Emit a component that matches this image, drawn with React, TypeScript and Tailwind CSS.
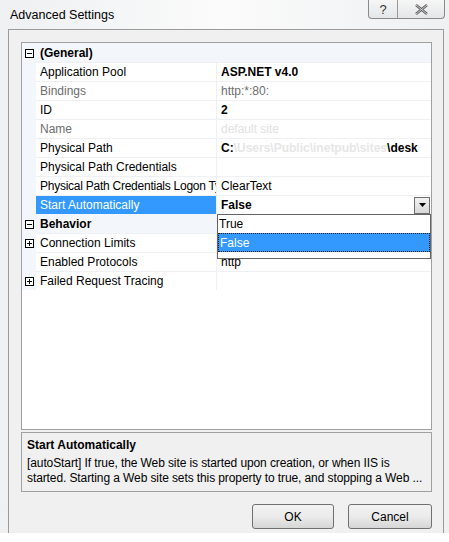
import React from 'react';

type Row = {
  name: string;
  value?: React.ReactNode;
  kind?: 'category' | 'prop';
  expander?: 'plus' | 'minus';
  dim?: boolean;
  selected?: boolean;
  tight?: boolean;
};

function Box({ sign }: { sign: 'plus' | 'minus' }) {
  return (
    <svg width="9" height="9" viewBox="0 0 9 9" className="block">
      <rect x="0.5" y="0.5" width="8" height="8" fill="#fff" stroke="#000" />
      <line x1="2" y1="4.5" x2="7" y2="4.5" stroke="#000" />
      {sign === 'plus' && <line x1="4.5" y1="2" x2="4.5" y2="7" stroke="#000" />}
    </svg>
  );
}

const rows: Row[] = [
  { name: '(General)', kind: 'category', expander: 'minus' },
  { name: 'Application Pool', value: <span className="font-bold">ASP.NET v4.0</span> },
  { name: 'Bindings', dim: true, value: <span className="text-[#6d6d6d]">http:*:80:</span> },
  { name: 'ID', value: <span className="font-bold">2</span> },
  { name: 'Name', dim: true, value: <span className="text-[#e2e2e2]">default site</span> },
  {
    name: 'Physical Path',
    value: (
      <span className="font-bold whitespace-nowrap">
        C:<span className="text-[#e6e6e6]">\Users\Public\inetpub\sites</span>\desk
      </span>
    ),
  },
  { name: 'Physical Path Credentials' },
  { name: 'Physical Path Credentials Logon Type', value: 'ClearText', tight: true },
  { name: 'Start Automatically', selected: true },
  { name: 'Behavior', kind: 'category', expander: 'minus' },
  { name: 'Connection Limits', expander: 'plus' },
  { name: 'Enabled Protocols', value: 'http' },
  { name: 'Failed Request Tracing', expander: 'plus' },
];

function GridRow({ row }: { row: Row }) {
  const cat = row.kind === 'category';
  return (
    <div className="flex h-[19px] relative">
      <div className="w-[14px] shrink-0 flex items-center justify-center bg-[#f3f6fb] pt-[1px]">
        {row.expander && <Box sign={row.expander} />}
      </div>
      {cat ? (
        <div className="flex-1 bg-[#f3f6fb] flex items-center pl-[4px] pt-[1px] font-bold">
          <span className="whitespace-nowrap">{row.name}</span>
        </div>
      ) : (
        <>
          <div className="w-[181px] shrink-0 border-t border-r border-[#eef0f3] flex overflow-hidden">
            <div
              className={`flex-1 flex items-center pl-[4px] ${
                row.selected ? 'bg-[#3399ff] text-white' : row.dim ? 'text-[#6d6d6d]' : ''
              }`}
            >
              <span className={`whitespace-nowrap shrink-0 ${row.tight ? 'tracking-[-0.25px]' : ''}`}>{row.name}</span>
            </div>
          </div>
          <div className="flex-1 min-w-0 flex items-center pl-[4px] overflow-hidden whitespace-nowrap border-t border-[#eef0f3]">
            {row.selected ? (
              <div className="flex-1 flex items-center justify-between">
                <span className="font-bold">False</span>
                <div className="w-[16px] h-[17px] mr-[1px] border border-[#6f6f6f] bg-gradient-to-b from-[#f2f2f2] to-[#d9d9d9] flex items-center justify-center">
                  <svg width="7" height="4" viewBox="0 0 7 4">
                    <polygon points="0,0 7,0 3.5,4" fill="#000" />
                  </svg>
                </div>
              </div>
            ) : (
              <span className="shrink-0">{row.value}</span>
            )}
          </div>
        </>
      )}
      {row.selected && (
        <div className="absolute left-[195px] top-[19px] w-[214px] z-10 bg-white border border-[#646464] flex flex-col">
          <div className="h-[18px] flex items-center pl-[1px]">True</div>
          <div className="h-[19px] flex items-center pl-[1px] bg-[#3399ff] text-white border border-dotted border-[#1a1a1a]">
            False
          </div>
          <div className="h-[6px]" />
        </div>
      )}
    </div>
  );
}

export default function App() {
  return (
    <div className="w-[449px] h-[542px] bg-white overflow-hidden flex flex-col text-[12px] leading-none text-black font-['Liberation_Sans',Arial,sans-serif]">
      <div className="h-[533px] flex flex-col bg-gradient-to-r from-[#eef0f2] via-[#fbfbfb] to-[#eef0f2]">
        {/* title bar */}
        <div className="h-[29px] flex shrink-0">
          <div className="pl-[10px] pt-[9px] text-[12.5px]">Advanced Settings</div>
          <div className="ml-auto mr-[4px] h-[19px] flex border border-t-0 border-[#8a8a8a] rounded-b-[4px] bg-gradient-to-b from-[#f6f6f6] to-[#e4e6e8]">
            <div className="w-[29px] flex items-center justify-center border-r border-[#9a9a9a] text-[13px] text-[#333]">?</div>
            <div className="w-[46px] flex items-center justify-center">
              <svg width="13" height="11" viewBox="0 0 13 11">
                <path d="M1 1 L12 10 M12 1 L1 10" stroke="#555" strokeWidth="2.4" fill="none" />
                <path d="M1 1 L12 10 M12 1 L1 10" stroke="#f4f4f4" strokeWidth="0.8" fill="none" />
              </svg>
            </div>
          </div>
        </div>
        {/* body */}
        <div className="flex flex-1 min-h-0">
          <div className="w-[9px] shrink-0 border-r border-[#9b9b9b]" />
          <div className="flex-1 min-w-0 bg-[#f0f0f0] border-t border-r border-[#9b9b9b] pl-[12px] pr-[10px] pt-[12px] flex flex-col">
            <div className="h-[388px] w-[411px] border border-[#a0a0a0] bg-white flex flex-col">
              {rows.map((r) => (
                <GridRow key={r.name} row={r} />
              ))}
            </div>
            <div className="mt-[2px] w-[411px] h-[60px] border border-[#a0a0a0] bg-[#f0f0f0] px-[5px] pt-[5px] flex flex-col gap-[4px]">
              <div className="font-bold h-[14px] flex items-center">Start Automatically</div>
              <div className="leading-[15px] tracking-[-0.1px] whitespace-nowrap">
                <div>[autoStart] If true, the Web site is started upon creation, or when IIS is</div>
                <div>started. Starting a Web site sets this property to true, and stopping a Web ...</div>
              </div>
            </div>
            <div className="flex justify-end gap-[14px] mt-[12px] pr-[1px]">
              <button className="w-[82px] h-[25px] rounded-[3px] border border-[#707070] bg-gradient-to-b from-[#f2f2f2] via-[#ebebeb] to-[#d6d6d6] flex items-center justify-center">
                OK
              </button>
              <button className="w-[84px] h-[25px] rounded-[3px] border border-[#707070] bg-gradient-to-b from-[#f2f2f2] via-[#ebebeb] to-[#d6d6d6] flex items-center justify-center">
                Cancel
              </button>
            </div>
          </div>
          <div className="w-[5px] shrink-0" />
        </div>
      </div>
    </div>
  );
}
